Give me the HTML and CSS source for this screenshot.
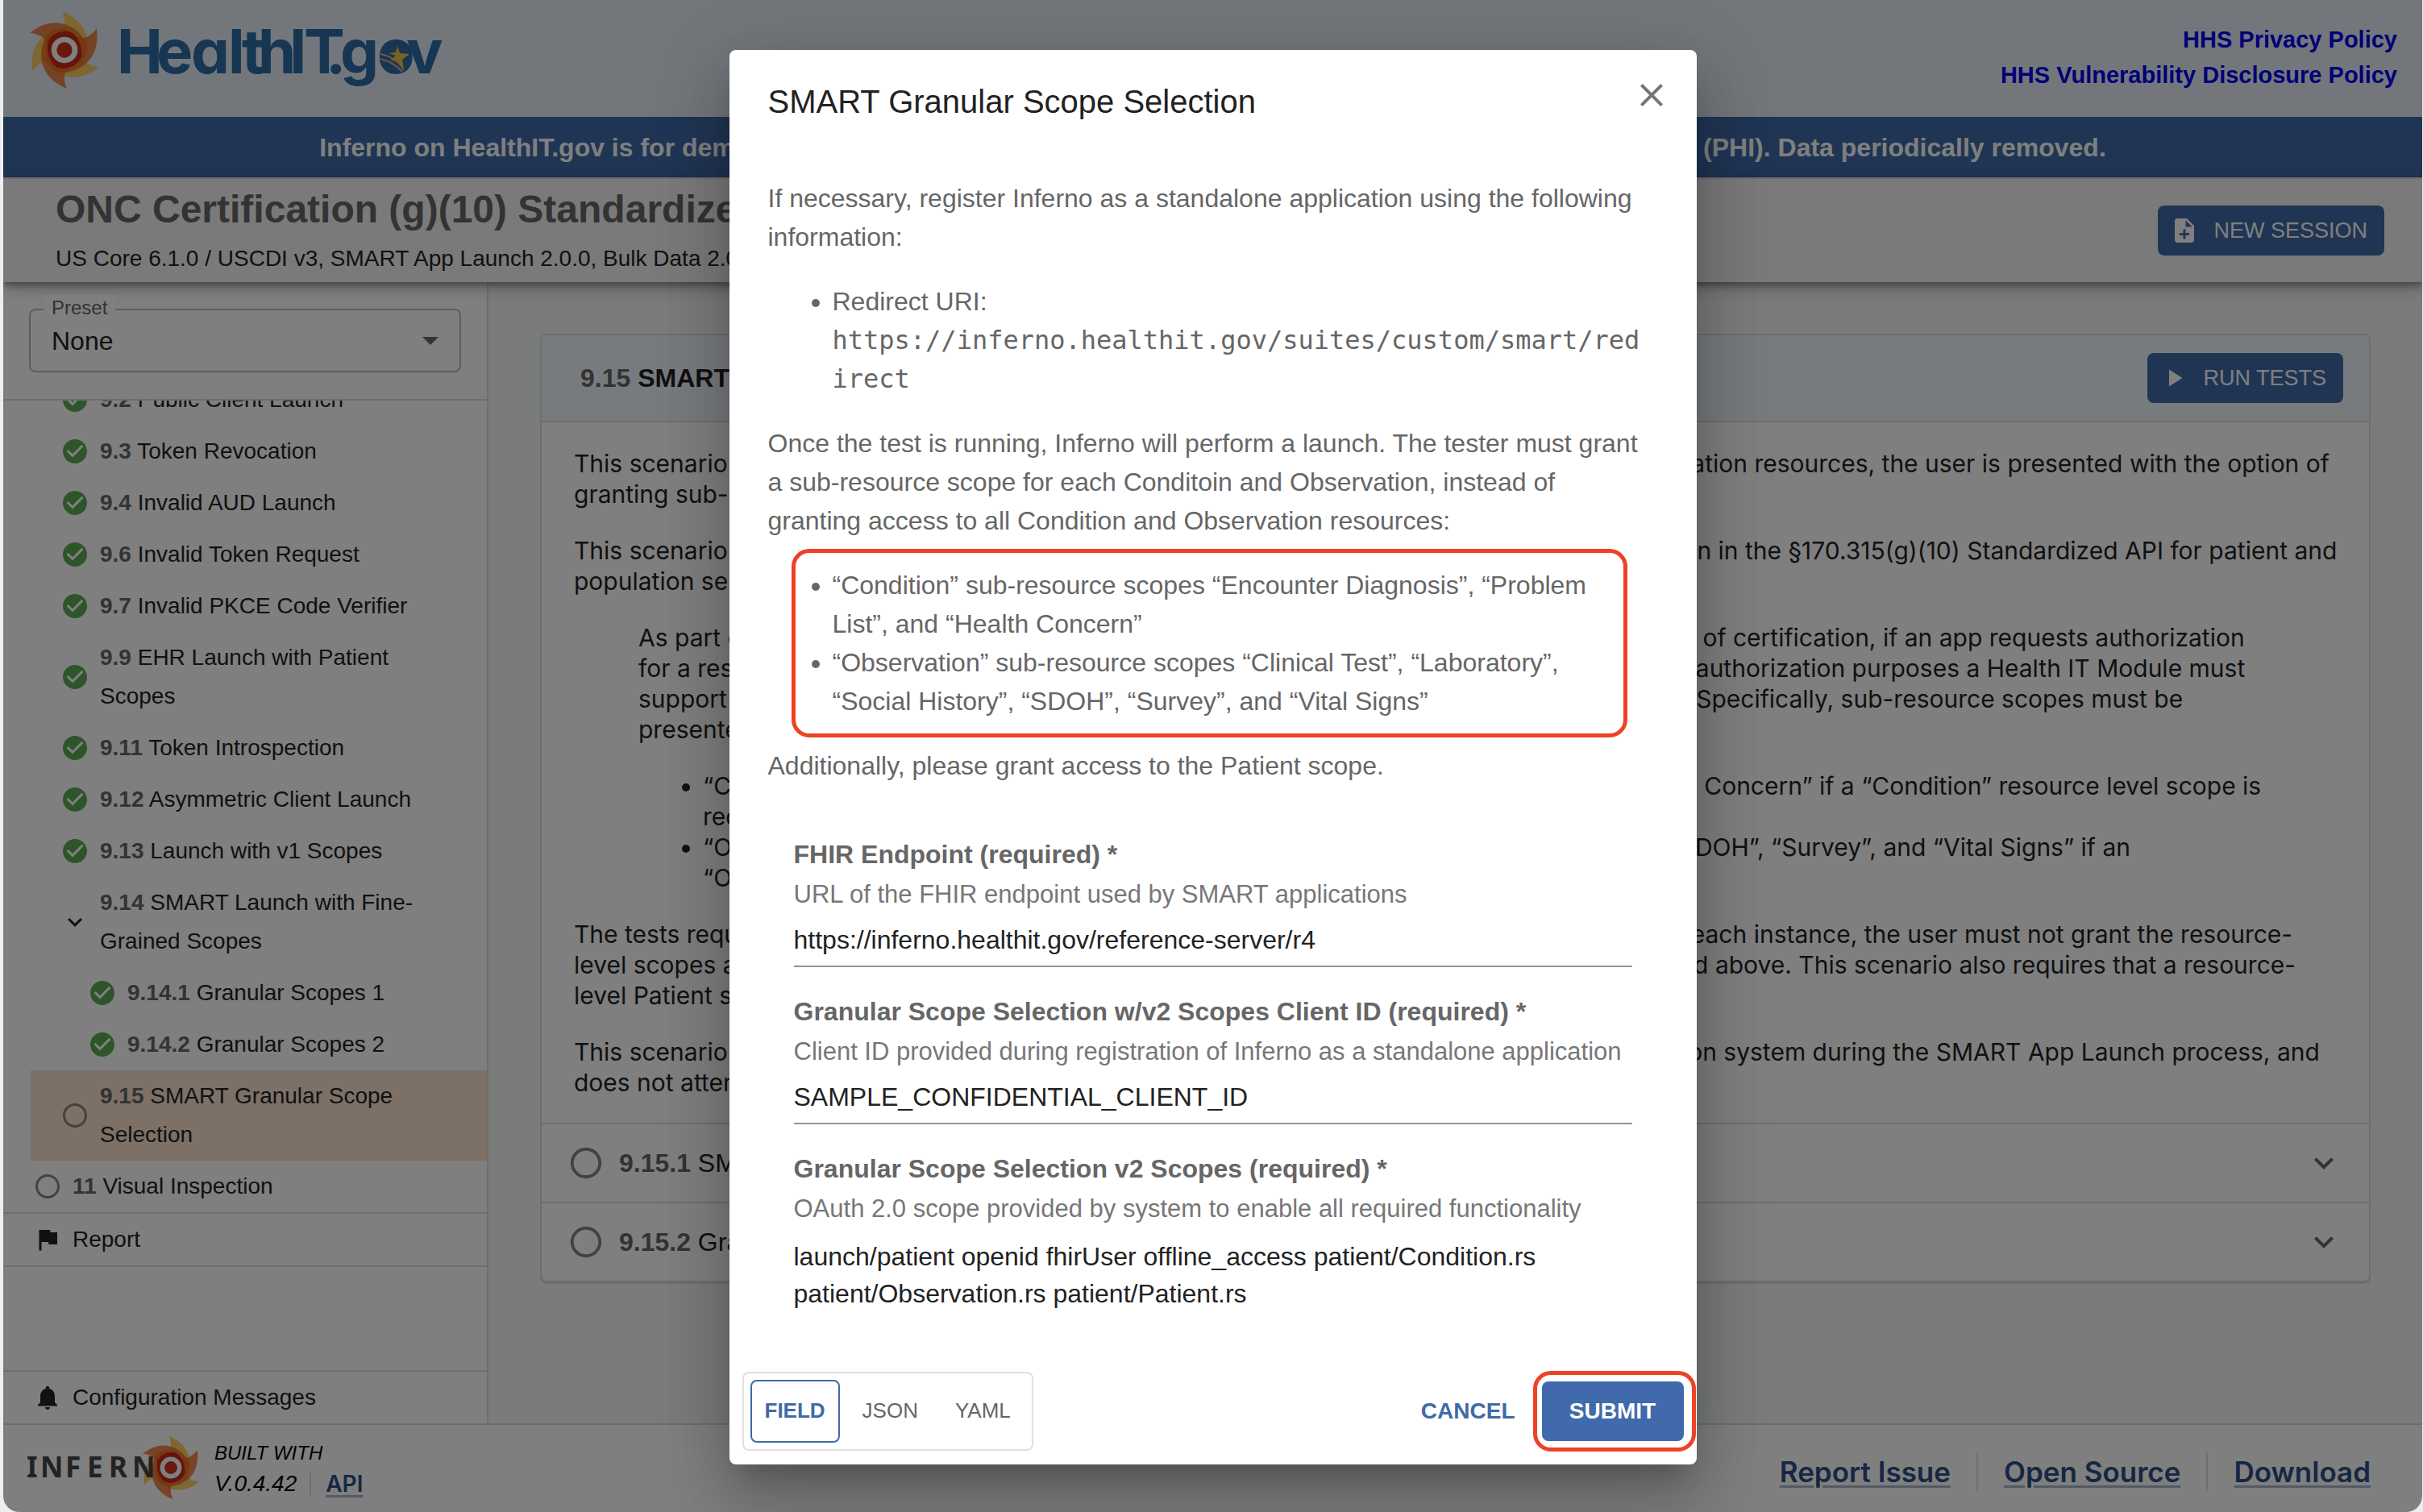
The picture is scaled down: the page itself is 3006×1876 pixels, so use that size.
FILE: index.html
```html
<!DOCTYPE html>
<html lang="en">
<head>
<meta charset="utf-8">
<title>Inferno - SMART Granular Scope Selection</title>
<link rel="stylesheet" href="styles.css">
</head>
<body>
<svg class="defs" aria-hidden="true">
  <defs>
    <symbol id="check" viewBox="0 0 24 24"><path d="M12 2C6.480 2 2 6.480 2 12s4.480 10 10 10 10-4.480 10-10S17.520 2 12 2zm-2 15-5-5 1.410-1.410L10 14.170l7.590-7.590L19 8l-9 9z"/></symbol>
    <symbol id="circle" viewBox="0 0 24 24"><path d="M12 2C6.480 2 2 6.480 2 12s4.480 10 10 10 10-4.480 10-10S17.520 2 12 2zm0 18c-4.420 0-8-3.580-8-8s3.580-8 8-8 8 3.580 8 8-3.580 8-8 8z"/></symbol>
    <symbol id="chevron" viewBox="0 0 24 24"><path d="M16.590 8.590 12 13.170 7.410 8.590 6 10l6 6 6-6z"/></symbol>
    <path id="petal" d="M-9-143C25-130 60-105 75-71C95-30 88 30 59 60C30 90-30 80-50 40C-60-10-40-45-15-68C5-85 4-115-9-143Z"/>
    <symbol id="sun" viewBox="-150 -150 300 300">
      <g fill="#fbc54a" fill-opacity=".85">
        <use href="#petal"/><use href="#petal" transform="rotate(120)"/><use href="#petal" transform="rotate(240)"/>
      </g>
      <g fill="#ea6a24" fill-opacity=".8">
        <use href="#petal" transform="rotate(60)"/><use href="#petal" transform="rotate(180)"/><use href="#petal" transform="rotate(300)"/>
      </g>
      <path d="M-62-28C-50-62-8-78 25-66C52-50 68-10 62 28C45 62 5 78-28 64C-55 45-68 8-62-28Z" fill="#c8281a"/>
      <circle r="39" fill="#d3301f" stroke="#fff" stroke-width="20"/>
    </symbol>
  </defs>
</svg>

<div class="window">
  <header class="site-header">
    <svg class="site-logo" viewBox="0 0 560 145" role="img" aria-label="HealthIT.gov">
      <use href="#sun" x="26" y="12" width="100" height="100"/>
      <text class="site-name" y="91" x="141 190 233 279 296 316 355 373 400 418 464 500">HealthIT.gov</text>
      <circle cx="486" cy="72" r="19" fill="#2c6ca8"/>
      <path d="M468 67C482 70 492 78 497 87M468 73C480 76 489 82 495 89" fill="none" stroke="#f0a48c" stroke-width="2"/>
      <path d="M489 57l3 9 12 1-9 7 2 12-8-10-9-1 7-6-9-3 9-1z" fill="#f5c63c"/>
    </svg>
    <nav class="policy-links">
      <a href="#privacy">HHS Privacy Policy</a>
      <a href="#disclosure">HHS Vulnerability Disclosure Policy</a>
    </nav>
  </header>
  <p class="banner">Inferno on HealthIT.gov is for demonstration and testing only. Do not enter any real Protected Health Information (PHI). Data periodically removed.</p>

  <div class="suite-header">
    <div>
      <h1>ONC Certification (g)(10) Standardized API</h1>
      <p>US Core 6.1.0 / USCDI v3, SMART App Launch 2.0.0, Bulk Data 2.0.0</p>
    </div>
    <button type="button" class="primary"><svg class="icon" viewBox="0 0 24 24"><path d="M14 2H6c-1.100 0-1.990.9-1.990 2L4 20c0 1.100.89 2 1.990 2H18c1.100 0 2-.9 2-2V8l-6-6zm2 14h-3v3h-2v-3H8v-2h3v-3h2v3h3v2zm-3-7V3.500L18.500 9H13z"/></svg>NEW SESSION</button>
  </div>

  <div class="body">
    <aside class="sidebar">
      <div class="preset">
        <div class="preset-box">
          <label for="preset">Preset</label>
          <select id="preset"><option>None</option></select>
          <svg class="icon-xl preset-arrow" viewBox="0 0 24 24"><path d="m7 10 5 5 5-5z"/></svg>
        </div>
      </div>
      <div class="tree">
        <ul>
          <li><svg class="icon pass"><use href="#check"/></svg><span><b>9.2</b> Public Client Launch</span></li>
          <li><svg class="icon pass"><use href="#check"/></svg><span><b>9.3</b> Token Revocation</span></li>
          <li><svg class="icon pass"><use href="#check"/></svg><span><b>9.4</b> Invalid AUD Launch</span></li>
          <li><svg class="icon pass"><use href="#check"/></svg><span><b>9.6</b> Invalid Token Request</span></li>
          <li><svg class="icon pass"><use href="#check"/></svg><span><b>9.7</b> Invalid PKCE Code Verifier</span></li>
          <li><svg class="icon pass"><use href="#check"/></svg><span><b>9.9</b> EHR Launch with Patient Scopes</span></li>
          <li><svg class="icon pass"><use href="#check"/></svg><span><b>9.11</b> Token Introspection</span></li>
          <li><svg class="icon pass"><use href="#check"/></svg><span><b>9.12</b> Asymmetric Client Launch</span></li>
          <li><svg class="icon pass"><use href="#check"/></svg><span><b>9.13</b> Launch with v1 Scopes</span></li>
          <li><svg class="icon"><use href="#chevron"/></svg><span><b>9.14</b> SMART Launch with Fine-Grained Scopes</span></li>
          <li class="deep"><svg class="icon pass"><use href="#check"/></svg><span><b>9.14.1</b> Granular Scopes 1</span></li>
          <li class="deep"><svg class="icon pass"><use href="#check"/></svg><span><b>9.14.2</b> Granular Scopes 2</span></li>
          <li class="selected"><svg class="icon muted"><use href="#circle"/></svg><span><b>9.15</b> SMART Granular Scope Selection</span></li>
          <li class="top"><svg class="icon muted"><use href="#circle"/></svg><span><b>11</b> Visual Inspection</span></li>
        </ul>
      </div>
      <div class="side-link"><svg class="icon" viewBox="0 0 24 24"><path d="M14.400 6 14 4H5v17h2v-7h5.600l.4 2h7V6z"/></svg><span>Report</span></div>
      <div class="side-link side-last"><svg class="icon" viewBox="0 0 24 24"><path d="M12 22c1.100 0 2-.9 2-2h-4c0 1.100.89 2 2 2zm6-6v-5c0-3.070-1.640-5.640-4.500-6.320V4c0-.83-.67-1.500-1.500-1.500s-1.500.67-1.500 1.500v.68C7.630 5.360 6 7.920 6 11v5l-2 2v1h16v-1l-2-2z"/></svg><span>Configuration Messages</span></div>
    </aside>

    <main>
      <section class="card">
        <div class="card-head">
          <h2><b>9.15</b> SMART Granular Scope Selection</h2>
          <button type="button" class="primary"><svg class="icon" viewBox="0 0 24 24"><path d="M8 5v14l11-7z"/></svg>RUN TESTS</button>
        </div>
        <div class="prose">
          <p>This scenario verifies that when resource-level scopes are requested for all Condition and Observation resources, the user is presented with the option of<br>granting sub-resource scopes instead of the requested resource-level scope if desired.</p>
          <p>This scenario supports the sub-resource scope requirements that apply to standalone authorization in the §170.315(g)(10) Standardized API for patient and<br>population services criterion.</p>
          <blockquote>
            <p>As part of supporting the SMART permission-v2 authorization capability, for all the purposes of certification, if an app requests authorization<br>for a resource level scope for either “Condition” or “Observation” resources, then for patient authorization purposes a Health IT Module must<br>support presenting the sub-resource scopes to the end user for selection and authorization. Specifically, sub-resource scopes must be<br>presented as follows:</p>
            <ul>
              <li>“Condition” sub-resource scopes of “Encounter Diagnosis”, “Problem List”, and “Health Concern” if a “Condition” resource level scope is<br>requested</li>
              <li>“Observation” sub-resource scopes of “Clinical Test”, “Laboratory”, “Social History”, “SDOH”, “Survey”, and “Vital Signs” if an<br>“Observation” resource level scope is requested</li>
            </ul>
          </blockquote>
          <p>The tests request resource-level scopes for both Condition and Observation during the launch. In each instance, the user must not grant the resource-<br>level scopes and must instead grant the sub-resource scopes in the requirement that are described above. This scenario also requires that a resource-<br>level Patient scope is granted.</p>
          <p>This scenario only checks the granted sub-resource scopes which are returned by the authorization system during the SMART App Launch process, and<br>does not attempt to access any resources.</p>
        </div>
        <div class="test-row"><svg class="icon-lg muted"><use href="#circle"/></svg><span><b>9.15.1</b> SMART Granular Scopes 1</span><svg class="icon-xl"><use href="#chevron"/></svg></div>
        <div class="test-row"><svg class="icon-lg muted"><use href="#circle"/></svg><span><b>9.15.2</b> Granular Scopes 2</span><svg class="icon-xl"><use href="#chevron"/></svg></div>
      </section>
    </main>
  </div>

  <footer>
    <svg class="inferno-logo" viewBox="0 0 222 108" role="img" aria-label="Inferno">
      <use href="#sun" x="138" y="12" width="82" height="82"/>
      <text class="inferno-name" y="65" x="0 17 48 75 102 131">INFERN</text>
    </svg>
    <div class="built">
      <span>BUILT WITH</span>
      <div class="version"><i>V.0.4.42</i><a href="#api">API</a></div>
    </div>
    <nav class="footer-links">
      <a href="#issue">Report Issue</a>
      <a href="#source">Open Source</a>
      <a href="#download">Download</a>
    </nav>
  </footer>

  <div class="backdrop">
    <div class="dialog" role="dialog" aria-labelledby="dialog-title">
      <div class="dialog-head">
        <h2 id="dialog-title">SMART Granular Scope Selection</h2>
        <button type="button" class="close" aria-label="Close"><svg class="icon-xl" viewBox="0 0 24 24"><path d="M19 6.410 17.590 5 12 10.590 6.410 5 5 6.410 10.590 12 5 17.590 6.410 19 12 13.410 17.590 19 19 17.590 13.410 12z"/></svg></button>
      </div>
      <div class="instructions">
        <p>If necessary, register Inferno as a standalone application using the following information:</p>
        <ul>
          <li>Redirect URI:<br><code>https://inferno.healthit.gov/suites/custom/smart/red<br>irect</code></li>
        </ul>
        <p>Once the test is running, Inferno will perform a launch. The tester must grant<br>a sub-resource scope for each Conditoin and Observation, instead of<br>granting access to all Condition and Observation resources:</p>
        <ul class="marked">
          <li>“Condition” sub-resource scopes “Encounter Diagnosis”, “Problem<br>List”, and “Health Concern”</li>
          <li>“Observation” sub-resource scopes “Clinical Test”, “Laboratory”,<br>“Social History”, “SDOH”, “Survey”, and “Vital Signs”</li>
        </ul>
        <p>Additionally, please grant access to the Patient scope.</p>
      </div>
      <form class="fields" id="inputs">
        <div class="field">
          <label for="endpoint">FHIR Endpoint (required) *</label>
          <p>URL of the FHIR endpoint used by SMART applications</p>
          <input id="endpoint" type="text" value="https://inferno.healthit.gov/reference-server/r4">
        </div>
        <div class="field">
          <label for="client">Granular Scope Selection w/v2 Scopes Client ID (required) *</label>
          <p>Client ID provided during registration of Inferno as a standalone application</p>
          <input id="client" type="text" value="SAMPLE_CONFIDENTIAL_CLIENT_ID">
        </div>
        <div class="field">
          <label for="scopes">Granular Scope Selection v2 Scopes (required) *</label>
          <p>OAuth 2.0 scope provided by system to enable all required functionality</p>
          <textarea id="scopes" rows="2">launch/patient openid fhirUser offline_access patient/Condition.rs patient/Observation.rs patient/Patient.rs</textarea>
        </div>
      </form>
      <div class="actions">
        <div class="formats">
          <button type="button" class="active">FIELD</button>
          <button type="button">JSON</button>
          <button type="button">YAML</button>
        </div>
        <button type="button" class="cancel">CANCEL</button>
        <div class="submit-mark"><button type="submit" form="inputs" class="submit">SUBMIT</button></div>
      </div>
    </div>
  </div>
</div>
</body>
</html>
```

FILE: styles.css
```css
* { box-sizing: border-box; }

html { background: #eee; }

body {
  margin: 0;
  padding: 0 1px 0 4px;
  font-family: "Liberation Sans", Arial, sans-serif;
  font-size: 32px;
  color: #222;
}

h1, h2, p, ul, blockquote { margin: 0; padding: 0; }
button, input, select, textarea { font: inherit; color: inherit; margin: 0; }
button { cursor: pointer; border: 0; background: none; }
b { color: #666; }

.defs { position: absolute; width: 0; height: 0; }

.icon, .icon-lg, .icon-xl { flex: none; fill: currentColor; }
.icon { width: 36px; height: 36px; }
.icon-lg { width: 46px; height: 46px; }
.icon-xl { width: 48px; height: 48px; }
.pass { color: #5cab54; }
.muted { color: #858585; }

.window {
  position: relative;
  display: flex;
  flex-direction: column;
  min-height: 100vh;
  overflow: hidden;
  border-radius: 0 0 20px 20px;
  background: #fff;
}

/* Site header */
.site-header {
  display: flex;
  justify-content: space-between;
  height: 145px;
  background: #e6eef6;
}
.site-logo { width: 560px; height: 145px; }
.site-name { font: 700 76px Inter, sans-serif; font-feature-settings: "cv11" 1; fill: #2c6ca8; }
.policy-links {
  display: flex;
  flex-direction: column;
  align-items: flex-end;
  padding: 27px 31px 0 0;
  font-size: 29px;
  line-height: 44px;
  font-weight: 700;
}
.policy-links a { color: #0000ee; text-decoration: none; }

.banner {
  height: 75px;
  line-height: 76px;
  text-align: center;
  white-space: nowrap;
  font-weight: 700;
  color: #fff;
  background: #406aa8;
}

.suite-header {
  position: relative;
  display: flex;
  justify-content: space-between;
  align-items: center;
  height: 130px;
  padding: 0 47px 0 65px;
  border-top: 2px solid #d8d8d8;
  background: #f5f5f5;
  box-shadow: 0 4px 8px rgba(0, 0, 0, .35), 0 8px 20px rgba(0, 0, 0, .2);
}
.suite-header h1 { padding-top: 6px; font-size: 48px; line-height: 64px; color: #666; }
.suite-header p { font-size: 28px; line-height: 58px; }

.primary {
  display: flex;
  align-items: center;
  gap: 18px;
  height: 62px;
  padding: 0 21px 0 15px;
  border-radius: 8px;
  font-size: 27px;
  color: #fff;
  background: #406aa8;
}

.body { display: flex; flex: 1; }

/* Sidebar */
.sidebar {
  flex: none;
  display: flex;
  flex-direction: column;
  width: 602px;
  border-right: 2px solid #ddd;
  font-size: 28px;
  line-height: 48px;
}
.preset { padding: 33px 32px; border-bottom: 2px solid #ddd; }
.preset-box { position: relative; }
.preset label {
  position: absolute;
  top: -17px;
  left: 18px;
  padding: 0 10px;
  font-size: 24px;
  line-height: 32px;
  color: #666;
  background: #fff;
}
.preset select {
  display: block;
  width: 100%;
  height: 79px;
  padding: 0 26px;
  font-size: 32px;
  border: 2px solid #bbb;
  border-radius: 8px;
  background: none;
  appearance: none;
}
.preset-arrow { position: absolute; right: 14px; top: 15px; color: #666; }

.tree { overflow: hidden; }
.tree ul { margin-top: -33px; list-style: none; }
.tree li {
  display: flex;
  align-items: center;
  gap: 13px;
  margin-left: 34px;
  padding: 8px 40px 8px 37px;
}
.tree li.deep { padding-left: 71px; }
.tree li.top { padding-left: 3px; }
.tree li.selected { background: #f8e0ce; }

.side-link {
  display: flex;
  align-items: center;
  gap: 13px;
  height: 68px;
  padding-left: 37px;
  border-top: 2px solid #ddd;
  border-bottom: 2px solid #ddd;
}
.side-last { height: 66px; margin-top: auto; border-bottom: 0; }

/* Test group */
main { flex: 1; min-width: 0; padding: 64px; background: #f4f8f5; }
.card {
  overflow: hidden;
  border: 2px solid #ddd;
  border-radius: 8px;
  background: #fff;
  box-shadow: 0 2px 0 #ddd;
}
.card-head {
  display: flex;
  justify-content: space-between;
  align-items: center;
  height: 108px;
  padding: 0 32px 0 48px;
  border-bottom: 2px solid #ddd;
  background: #f0f7fc;
}
.card-head h2 { font-size: 32px; }

.prose {
  display: flex;
  flex-direction: column;
  gap: 32px;
  padding: 32px 40px 31px;
  font: 30px/38px Inter, sans-serif;
  white-space: nowrap;
}
.prose blockquote { margin-left: 80px; }
.prose ul { margin-top: 32px; padding-left: 80px; }

.test-row {
  display: flex;
  align-items: center;
  gap: 18px;
  height: 98px;
  padding: 0 32px;
  border-top: 2px solid #ddd;
  color: #222;
}
.test-row .icon-xl { margin-left: auto; color: #666; }

/* Footer */
footer {
  display: flex;
  height: 110px;
  padding: 0 64px 0 29px;
  border-top: 2px solid #ddd;
}
footer a {
  font-family: Inter, sans-serif;
  font-weight: 600;
  color: #2c4f86;
  text-underline-offset: 4px;
  text-decoration-thickness: 3px;
  text-decoration-color: #a6b4cc;
}
.inferno-logo { width: 222px; height: 108px; }
.inferno-name { font: 700 35px "Noto Sans", sans-serif; fill: #444; }
.built { padding: 18px 0 0 11px; font-size: 24px; line-height: 34px; color: #000; }
.built > span { font-style: italic; }
.version { display: flex; align-items: center; gap: 18px; font-size: 28px; line-height: 42px; }
.version i { padding-right: 16px; border-right: 2px solid #ddd; line-height: 28px; }
.footer-links { display: flex; align-items: center; margin-left: auto; padding-top: 8px; font-size: 35px; }
.footer-links a { line-height: 48px; }
.footer-links a + a { margin-left: 32px; padding-left: 32px; border-left: 2px solid #ddd; }

/* Dialog */
.backdrop {
  position: absolute;
  inset: 0;
  display: flex;
  align-items: center;
  justify-content: center;
  padding-top: 2px;
  background: rgba(0, 0, 0, .5);
}
.dialog {
  width: 1200px;
  border-radius: 8px;
  background: #fff;
  box-shadow: 0 22px 30px -14px rgba(0, 0, 0, .2), 0 48px 76px 6px rgba(0, 0, 0, .14), 0 18px 92px 16px rgba(0, 0, 0, .12);
}
.dialog-head { display: flex; justify-content: space-between; padding: 32px 32px 64px 48px; }
.dialog-head h2 { font-size: 40px; font-weight: 400; line-height: 64px; }
.close { height: 48px; padding: 0; color: #757575; }

.instructions {
  display: flex;
  flex-direction: column;
  gap: 32px;
  padding: 0 48px;
  line-height: 48px;
  color: #666;
}
.instructions ul { padding-left: 80px; }
.instructions code { font: 32px "DejaVu Sans Mono", monospace; line-height: 48px; }
.marked { position: relative; }
.marked::before {
  content: "";
  position: absolute;
  inset: -21px 38px -21px 29px;
  border: 5px solid #ee4226;
  border-radius: 22px;
}

.fields { display: flex; flex-direction: column; gap: 31px; padding: 62px 80px 73px; }
.field label { display: block; font-weight: 700; line-height: 48px; color: #666; }
.field p { font-size: 31px; line-height: 52px; color: #777; white-space: nowrap; }
.field input {
  display: block;
  width: 100%;
  height: 64px;
  padding: 0;
  border: 0;
  border-bottom: 2px solid #949494;
  outline: 0;
  background: none;
}
.field textarea {
  display: block;
  width: 100%;
  height: 102px;
  padding: 10px 0 0;
  border: 0;
  outline: 0;
  resize: none;
  overflow: hidden;
  line-height: 46px;
  background: none;
}

.actions { display: flex; align-items: center; padding: 0 0 16px 16px; }
.formats {
  display: flex;
  gap: 10px;
  padding: 8px;
  border: 2px solid #e0e0e0;
  border-radius: 8px;
}
.formats button {
  height: 78px;
  padding: 0 16px;
  font-size: 26px;
  color: #666;
  border: 2px solid transparent;
  border-radius: 8px;
}
.formats .active { font-weight: 700; color: #406aa8; border-color: #406aa8; }
.cancel { margin-left: auto; padding: 0 22px 0 0; font-size: 28px; font-weight: 700; color: #406aa8; }
.submit-mark {
  margin-right: 1px;
  padding: 8px 10px 8px 6px;
  border: 5px solid #ee4226;
  border-radius: 22px;
}
.submit {
  display: block;
  width: 176px;
  height: 74px;
  padding: 0;
  font-size: 28px;
  font-weight: 700;
  color: #fff;
  border-radius: 8px;
  background: #406aac;
}
```
